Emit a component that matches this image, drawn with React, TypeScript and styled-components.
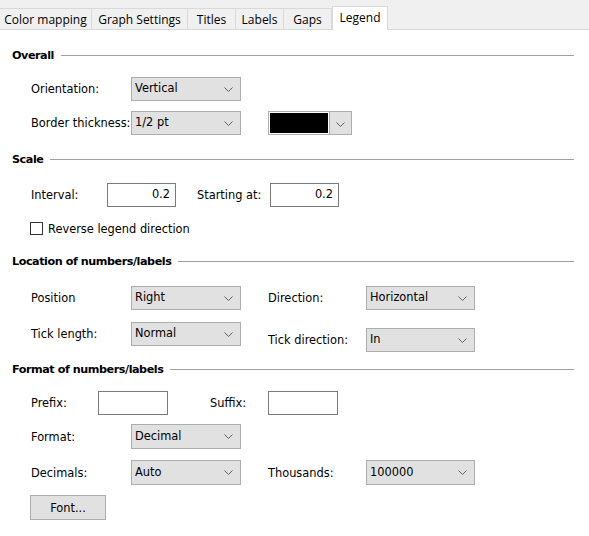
import styled, { createGlobalStyle } from 'styled-components';

const GlobalStyle = createGlobalStyle`
  html, body {
    margin: 0;
    padding: 0;
    background: #ffffff;
  }
  body {
    font-family: "DejaVu Sans", Tahoma, sans-serif;
    font-size: 11.4px;
    color: #000000;
  }
`;

const Page = styled.div`
  width: 589px;
  height: 536px;
  background: #ffffff;
  overflow: hidden;
`;

const TabBar = styled.div`
  height: 29px;
  background: #f0f0f0;
  border-bottom: 1px solid #d9d9d9;
  display: flex;
  align-items: flex-end;
`;

const Tab = styled.div<{ $w: number; $active?: boolean }>`
  width: ${(p) => p.$w}px;
  height: ${(p) => (p.$active ? 24 : 21)}px;
  margin-bottom: ${(p) => (p.$active ? -1 : 0)}px;
  box-sizing: border-box;
  border: 1px solid #d9d9d9;
  border-bottom: none;
  border-left-width: ${(p) => (p.$active ? 1 : 0)}px;
  background: ${(p) => (p.$active ? '#ffffff' : '#f0f0f0')};
  display: flex;
  align-items: center;
  justify-content: center;
  padding-bottom: ${(p) => (p.$active ? 3 : 0)}px;
  font-family: "Open Sans", "Noto Sans", sans-serif;
  font-size: 12px;
  white-space: nowrap;
`;

const Content = styled.div`
  padding: 0 15px 0 12px;
`;

const SectionHeader = styled.div<{ $mt: number }>`
  margin-top: ${(p) => p.$mt}px;
  height: 14px;
  display: flex;
  align-items: center;
  font-weight: bold;
  font-size: 11.2px;
  letter-spacing: -0.45px;

  &::after {
    content: '';
    flex: 1;
    margin-left: 7px;
    border-top: 1px solid #a0a0a0;
  }
`;

const Row = styled.div<{ $mt: number; $indent?: number }>`
  margin-top: ${(p) => p.$mt}px;
  padding-left: ${(p) => p.$indent ?? 19}px;
  display: flex;
  align-items: flex-start;
`;

const Field = styled.div<{ $dy?: number; $h?: number }>`
  display: flex;
  align-items: center;
  height: ${(p) => p.$h ?? 24}px;
  margin-top: ${(p) => p.$dy ?? 0}px;
`;

const Label = styled.span<{ $w?: number; $ml?: number }>`
  display: inline-block;
  width: ${(p) => (p.$w ? `${p.$w}px` : 'auto')};
  margin-left: ${(p) => p.$ml ?? 0}px;
  white-space: nowrap;
`;

const SelectBox = styled.div<{ $w: number; $h?: number }>`
  width: ${(p) => p.$w}px;
  height: ${(p) => p.$h ?? 24}px;
  box-sizing: border-box;
  background: #e1e1e1;
  border: 1px solid #adadad;
  display: flex;
  align-items: center;
  justify-content: space-between;
  padding: 0 7px 2px 3px;
`;

const Chevron = () => (
  <svg width="9" height="5" viewBox="0 0 9 5" style={{ marginTop: 2 }}>
    <path d="M0.5 0.5 L4.5 4.5 L8.5 0.5" fill="none" stroke="#606060" strokeWidth="1" />
  </svg>
);

const Select = ({ value, w, h }: { value: string; w: number; h?: number }) => (
  <SelectBox $w={w} $h={h}>
    <span>{value}</span>
    <Chevron />
  </SelectBox>
);

const TextBox = styled.div<{ $w: number }>`
  width: ${(p) => p.$w}px;
  height: 24px;
  box-sizing: border-box;
  border: 1px solid #7a7a7a;
  background: #ffffff;
  display: flex;
  align-items: center;
  justify-content: flex-end;
  padding: 0 5px 3px 0;
`;

const ColorPicker = styled.div`
  margin-left: 27px;
  width: 84px;
  height: 24px;
  box-sizing: border-box;
  border: 1px solid #adadad;
  background: #ffffff;
  display: flex;
`;

const Swatch = styled.div<{ $color: string }>`
  flex: 1;
  margin: 1px;
  background: ${(p) => p.$color};
`;

const PickerButton = styled.div`
  width: 21px;
  border-left: 1px solid #adadad;
  background: #e1e1e1;
  display: flex;
  align-items: center;
  justify-content: center;
`;

const CheckRow = styled.label`
  display: flex;
  align-items: center;
  height: 13px;
  gap: 5px;
`;

const CheckBox = styled.span`
  width: 13px;
  height: 13px;
  box-sizing: border-box;
  border: 1px solid #333333;
  background: #ffffff;
`;

const Button = styled.div`
  width: 76px;
  height: 25px;
  box-sizing: border-box;
  background: #e1e1e1;
  border: 1px solid #adadad;
  display: flex;
  align-items: center;
  justify-content: center;
`;

const tabs = [
  { label: 'Color mapping', w: 92 },
  { label: 'Graph Settings', w: 96 },
  { label: 'Titles', w: 48 },
  { label: 'Labels', w: 48 },
  { label: 'Gaps', w: 48 },
];

export default function App() {
  return (
    <Page>
      <GlobalStyle />
      <TabBar>
        {tabs.map((t) => (
          <Tab key={t.label} $w={t.w}>
            {t.label}
          </Tab>
        ))}
        <Tab $w={56} $active>
          Legend
        </Tab>
      </TabBar>

      <Content>
        <SectionHeader $mt={18}>Overall</SectionHeader>
        <Row $mt={15}>
          <Field>
            <Label $w={100}>Orientation:</Label>
            <Select value="Vertical" w={110} />
          </Field>
        </Row>
        <Row $mt={10}>
          <Field>
            <Label $w={100}>Border thickness:</Label>
            <Select value="1/2 pt" w={110} />
            <ColorPicker>
              <Swatch $color="#000000" />
              <PickerButton>
                <Chevron />
              </PickerButton>
            </ColorPicker>
          </Field>
        </Row>

        <SectionHeader $mt={17}>Scale</SectionHeader>
        <Row $mt={17}>
          <Field>
            <Label $w={76}>Interval:</Label>
            <TextBox $w={69}>0.2</TextBox>
            <Label $w={73} $ml={21}>Starting at:</Label>
            <TextBox $w={69}>0.2</TextBox>
          </Field>
        </Row>
        <Row $mt={15} $indent={18}>
          <CheckRow>
            <CheckBox />
            <span>Reverse legend direction</span>
          </CheckRow>
        </Row>

        <SectionHeader $mt={19}>Location of numbers/labels</SectionHeader>
        <Row $mt={18}>
          <Field>
            <Label $w={100}>Position</Label>
            <Select value="Right" w={110} />
          </Field>
          <Field>
            <Label $w={98} $ml={27}>Direction:</Label>
            <Select value="Horizontal" w={109} />
          </Field>
        </Row>
        <Row $mt={12}>
          <Field>
            <Label $w={100}>Tick length:</Label>
            <Select value="Normal" w={110} />
          </Field>
          <Field $dy={6}>
            <Label $w={98} $ml={27}>Tick direction:</Label>
            <Select value="In" w={109} />
          </Field>
        </Row>

        <SectionHeader $mt={10}>Format of numbers/labels</SectionHeader>
        <Row $mt={15}>
          <Field>
            <Label $w={67}>Prefix:</Label>
            <TextBox $w={70} />
            <Label $w={58} $ml={42}>Suffix:</Label>
            <TextBox $w={70} />
          </Field>
        </Row>
        <Row $mt={9}>
          <Field $h={25}>
            <Label $w={100}>Format:</Label>
            <Select value="Decimal" w={110} h={25} />
          </Field>
        </Row>
        <Row $mt={11}>
          <Field $h={25}>
            <Label $w={100}>Decimals:</Label>
            <Select value="Auto" w={110} h={25} />
          </Field>
          <Field $h={25}>
            <Label $w={98} $ml={27}>Thousands:</Label>
            <Select value="100000" w={109} h={25} />
          </Field>
        </Row>
        <Row $mt={10} $indent={18}>
          <Button>Font...</Button>
        </Row>
      </Content>
    </Page>
  );
}
